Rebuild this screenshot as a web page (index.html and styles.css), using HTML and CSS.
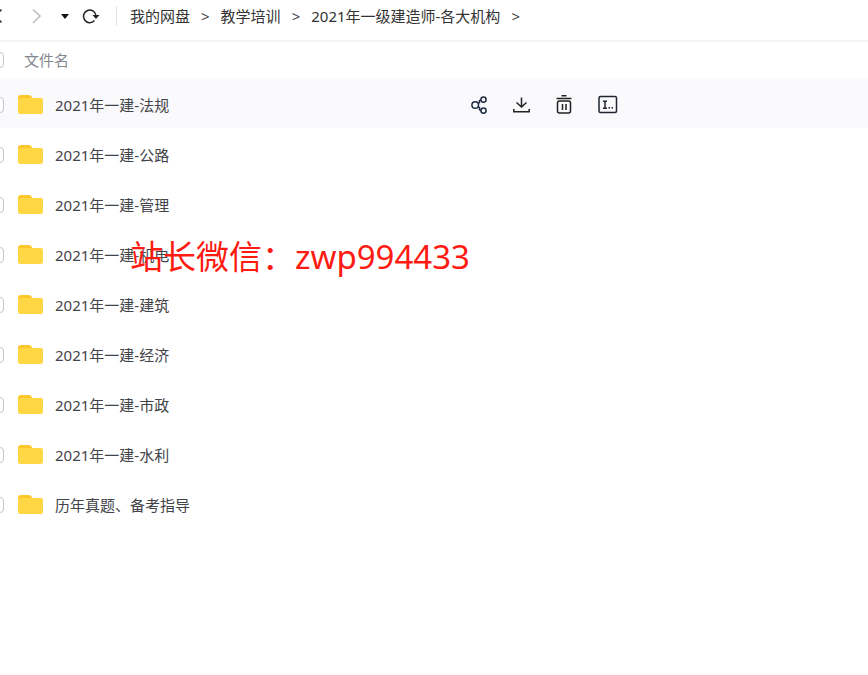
FILE: index.html
```html
<!DOCTYPE html>
<html lang="zh-CN">
<head>
    <meta charset="UTF-8">
    <meta name="viewport" content="width=device-width, initial-scale=1.0">
    <title>我的网盘</title>
    <link rel="stylesheet" href="styles.css">
</head>
<body>
    <svg class="sprite" aria-hidden="true">
        <symbol id="folder" viewBox="0 0 25 20">
            <path d="M0 3a3 3 0 0 1 3-3h8q1.500 0 2.500 1.500L15 4v8H0z" fill="#ffc62b"/>
            <path d="M0 5q0-2 2-2h21q2 0 2 2v11.500q0 2.500-2.500 2.500h-20Q0 19 0 16.500z" fill="#ffd644"/>
        </symbol>
    </svg>

    <div class="disk">
        <header class="toolbar">
            <button type="button" class="nav-btn" aria-label="后退">
                <svg width="24" height="24" viewBox="0 0 24 24"><path d="M13.500 5.500L7.500 12l6 6.500" stroke="#333" stroke-width="1.500" fill="none"/></svg>
            </button>
            <button type="button" class="nav-btn" aria-label="前进">
                <svg width="24" height="24" viewBox="0 0 24 24"><path d="M9 5.500l7 6.500-7 7" stroke="#bbb" stroke-width="1.500" fill="none"/></svg>
            </button>
            <button type="button" class="nav-btn" aria-label="历史">
                <svg width="10" height="24" viewBox="0 0 10 24"><path d="M1 10h8l-4 5z" fill="#111"/></svg>
            </button>
            <button type="button" class="nav-btn" aria-label="刷新">
                <svg width="18" height="24" viewBox="0 0 18 24"><path d="M12.500 16.500A6.300 6.300 0 1 1 14 11.500" stroke="#222" stroke-width="1.500" fill="none"/><path d="M10.500 11h7l-3.500 4z" fill="#222"/></svg>
            </button>
            <nav class="breadcrumb">
                <a href="#">我的网盘</a><span>&gt;</span>
                <a href="#">教学培训</a><span>&gt;</span>
                <a href="#">2021年一级建造师-各大机构</a><span>&gt;</span>
            </nav>
        </header>

        <div class="list-head">
            <input type="checkbox" id="all" aria-label="全选">
            <label for="all">文件名</label>
        </div>

        <ul class="file-list">
            <li class="file active">
                <input type="checkbox" id="f1">
                <svg class="folder"><use href="#folder"/></svg>
                <label for="f1">2021年一建-法规</label>
                <div class="actions">
                    <button type="button" aria-label="分享">
                        <svg width="20" height="20" viewBox="0 0 20 20" fill="none" stroke="#1c2a40" stroke-width="1.500"><circle cx="6.200" cy="10" r="3.300"/><circle cx="14.500" cy="4.600" r="2.600"/><circle cx="14.500" cy="15.600" r="2.600"/><path d="M9 8.300L10.500 7.500V5.500L12 5M9 11.700l1.500 1v2l1.500 .8"/></svg>
                    </button>
                    <button type="button" aria-label="下载">
                        <svg width="20" height="20" viewBox="0 0 20 20" fill="none" stroke="#222" stroke-width="1.500"><path d="M9.500 2.500v9.500M4.500 7.500l5 4.500 5-4.500M1.800 14v2.700h15.400V14"/></svg>
                    </button>
                    <button type="button" aria-label="删除">
                        <svg width="20" height="20" viewBox="0 0 20 20" fill="none" stroke="#222" stroke-width="1.500"><path d="M6.500 .8h5M1.500 3.500h15M7.500 9v6M11 9v6"/><rect x="2.500" y="6" width="13" height="12" rx="2"/></svg>
                    </button>
                    <button type="button" aria-label="重命名">
                        <svg width="20" height="20" viewBox="0 0 20 20" fill="none" stroke="#1f242e" stroke-width="1.500"><rect x="1" y="1.500" width="17.500" height="16" rx="1.500"/><path d="M5 6.200h4M7 6.500v6.500M5 13.200h4M10.500 12.700h1.500M13.500 12.700h1.500"/></svg>
                    </button>
                </div>
            </li>
            <li class="file">
                <input type="checkbox" id="f2">
                <svg class="folder"><use href="#folder"/></svg>
                <label for="f2">2021年一建-公路</label>
            </li>
            <li class="file">
                <input type="checkbox" id="f3">
                <svg class="folder"><use href="#folder"/></svg>
                <label for="f3">2021年一建-管理</label>
            </li>
            <li class="file">
                <input type="checkbox" id="f4">
                <svg class="folder"><use href="#folder"/></svg>
                <label for="f4">2021年一建-机电</label>
            </li>
            <li class="file">
                <input type="checkbox" id="f5">
                <svg class="folder"><use href="#folder"/></svg>
                <label for="f5">2021年一建-建筑</label>
            </li>
            <li class="file">
                <input type="checkbox" id="f6">
                <svg class="folder"><use href="#folder"/></svg>
                <label for="f6">2021年一建-经济</label>
            </li>
            <li class="file">
                <input type="checkbox" id="f7">
                <svg class="folder"><use href="#folder"/></svg>
                <label for="f7">2021年一建-市政</label>
            </li>
            <li class="file">
                <input type="checkbox" id="f8">
                <svg class="folder"><use href="#folder"/></svg>
                <label for="f8">2021年一建-水利</label>
            </li>
            <li class="file">
                <input type="checkbox" id="f9">
                <svg class="folder"><use href="#folder"/></svg>
                <label for="f9">历年真题、备考指导</label>
            </li>
        </ul>
    </div>

    <div class="watermark">站长微信：zwp994433</div>
</body>
</html>
```

FILE: styles.css
```css
* {
  box-sizing: border-box;
}

body {
  margin: 0;
  position: relative;
  overflow-x: hidden;
  background-color: #fff;
  color: #424449;
  font-family: "Noto Sans", "Noto Sans CJK SC", sans-serif;
  font-size: 15px;
  line-height: 24px;
}

.sprite {
  display: none;
}

/* the checkbox column runs under the left edge */
.disk {
  margin-left: -12px;
}

button {
  padding: 0;
  border: none;
  background: none;
  cursor: pointer;
}

button svg {
  display: block;
}

input[type="checkbox"] {
  appearance: none;
  flex: none;
  width: 16px;
  height: 16px;
  margin: 0;
  border: 1px solid #c4c6cb;
  border-radius: 4px;
  background-color: #fff;
}

.toolbar {
  display: flex;
  align-items: center;
  gap: 12px;
  height: 42px;
  padding-bottom: 8px;
  border-bottom: 2px solid #f3f3f5;
}

.breadcrumb {
  display: flex;
  gap: 11px;
  margin-left: 4px;
  padding-left: 13px;
  border-left: 1px solid #e2e2e4;
  line-height: 20px;
  white-space: nowrap;
}

.breadcrumb a {
  color: #333;
  text-decoration: none;
}

.list-head {
  display: flex;
  align-items: center;
  gap: 20px;
  height: 36px;
  color: #85878d;
}

.file-list {
  margin: 0;
  padding: 0;
  list-style: none;
}

.file {
  display: flex;
  align-items: center;
  height: 50px;
  padding-top: 4px;
}

.file.active {
  background-color: #fafafc;
}

.folder {
  flex: none;
  width: 25px;
  height: 20px;
  margin: 0 12px 0 14px;
}

.file label {
  flex: 0 1 414px;
}

.actions {
  display: flex;
  gap: 23px;
}

.watermark {
  position: absolute;
  top: 233px;
  left: 130px;
  color: #ff1a12;
  font-size: 33px;
  line-height: 48px;
  white-space: nowrap;
}
```
